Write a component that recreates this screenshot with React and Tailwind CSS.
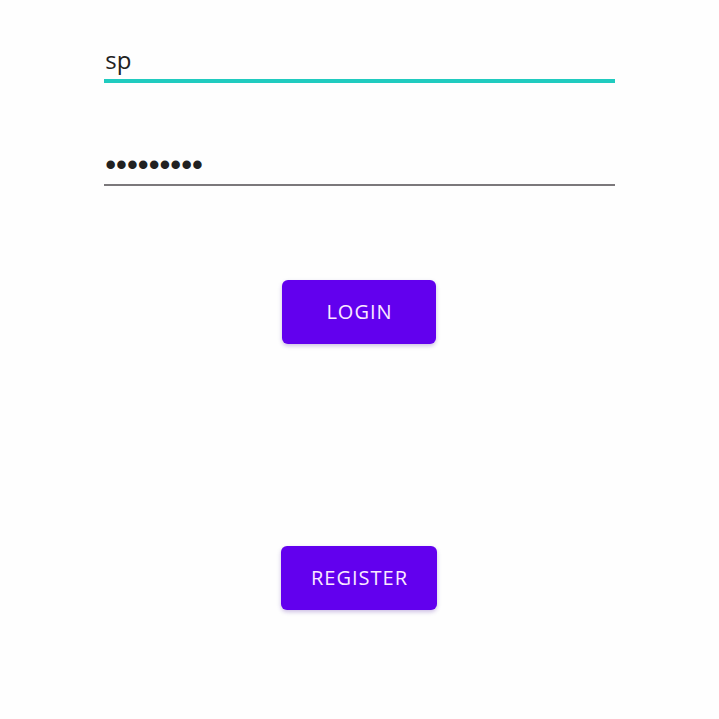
function Field({ label, type, value, className }) {
  return (
    <input
      aria-label={label}
      type={type}
      defaultValue={value}
      className={"block w-full rounded-none bg-transparent text-[#212121] outline-none " + className}
    />
  );
}

function ActionButton({ children, className }) {
  return (
    <button
      type="button"
      className={"h-16 rounded-md bg-[#6200ee] text-xl tracking-wider text-[#fbe9ff] shadow-[0_2px_4px_rgba(60,0,150,0.25)] " + className}
    >
      {children}
    </button>
  );
}

export default function App() {
  return (
    <main className="min-h-screen bg-[#fefefe] font-['Open_Sans','Noto_Sans',sans-serif]">
      <form className="mx-auto flex w-[71%] flex-col items-center pt-10">
        <Field label="Username" type="text" value="sp" className="h-[43px] border-b-4 border-[#20cbbf] pl-px text-2xl" />
        <Field label="Password" type="password" value="password1" className="mt-[63px] h-10 border-b-2 border-[#7b787b] pl-px font-['Liberation_Sans',Arial,sans-serif] text-[31px]" />
        <ActionButton className="mt-[94px] w-[154px]">LOGIN</ActionButton>
        <ActionButton className="mt-[202px] w-[156px]">REGISTER</ActionButton>
      </form>
    </main>
  );
}
